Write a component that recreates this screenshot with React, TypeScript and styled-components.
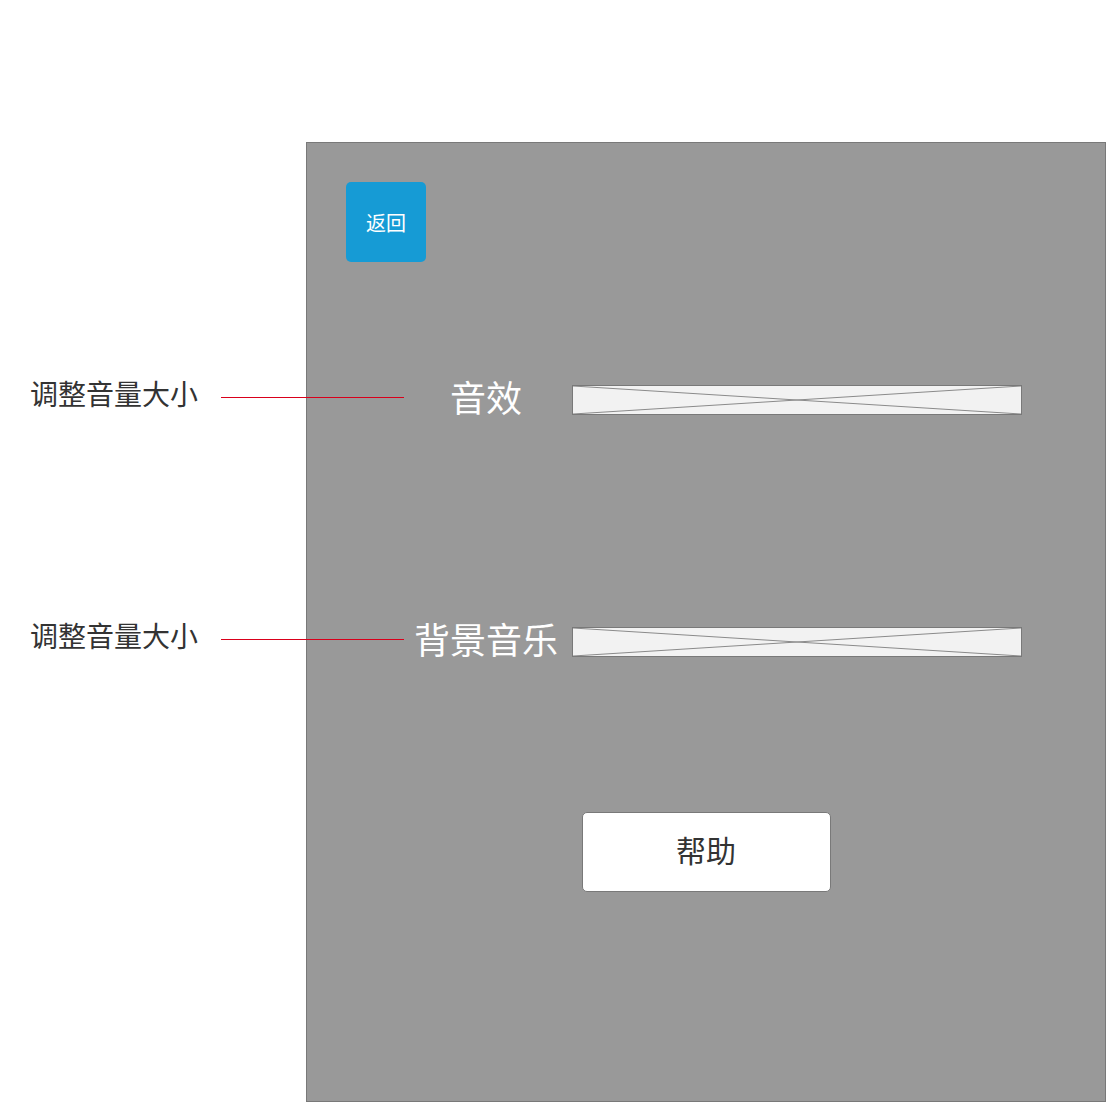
import React from "react";
import styled, { createGlobalStyle } from "styled-components";

const GlobalStyle = createGlobalStyle`
  html, body {
    margin: 0;
    padding: 0;
    background: #ffffff;
  }
  * { box-sizing: border-box; }
`;

const FONT = `"Noto Sans CJK SC", "Noto Sans", "Liberation Sans", sans-serif`;

const Page = styled.div`
  position: relative;
  width: 1106px;
  height: 1102px;
  padding: 142px 0 0 306px;
  font-family: ${FONT};
  overflow: hidden;
`;

const Panel = styled.div`
  width: 800px;
  height: 960px;
  border: 1px solid #797979;
  background: #999999;
  padding: 39px;
  display: flex;
  flex-direction: column;
`;

const BackButton = styled.button`
  width: 80px;
  height: 80px;
  border: none;
  border-radius: 5px;
  background: #169bd5;
  color: #ffffff;
  font-family: ${FONT};
  font-size: 20px;
  padding: 0;
  cursor: pointer;
`;

const Row = styled.div<{ $top: number }>`
  display: flex;
  align-items: center;
  height: 30px;
  margin-top: ${(p) => p.$top}px;
  margin-left: 60px;
`;

const Label = styled.div`
  width: 160px;
  text-align: center;
  color: #ffffff;
  font-size: 36px;
  line-height: 30px;
  padding-bottom: 9px;
  white-space: nowrap;
`;

const Slider = styled.div`
  width: 450px;
  height: 30px;
  margin-left: 6px;
  border: 1px solid #797979;
  background: #f2f2f2;
  display: flex;
  svg {
    width: 100%;
    height: 100%;
    display: block;
  }
`;

const HelpButton = styled.button`
  align-self: center;
  width: 249px;
  height: 80px;
  margin-top: 155px;
  border: 1px solid #797979;
  border-radius: 5px;
  background: #ffffff;
  color: #333333;
  font-family: ${FONT};
  font-size: 30px;
  padding: 0 0 7px 0;
  cursor: pointer;
`;

const Note = styled.div<{ $top: number }>`
  position: absolute;
  left: 30px;
  top: ${(p) => p.$top}px;
  height: 40px;
  display: flex;
  align-items: center;
`;

const NoteText = styled.div`
  width: 191px;
  color: #333333;
  font-size: 28px;
  line-height: 32px;
  padding-bottom: 8px;
  white-space: nowrap;
`;

const NoteLine = styled.div`
  width: 183px;
  height: 1px;
  background: #d9001b;
`;

const Placeholder = () => (
  <Slider>
    <svg viewBox="0 0 448 28" preserveAspectRatio="none">
      <line x1="0" y1="0" x2="448" y2="28" stroke="#8a8a8a" strokeWidth="1" />
      <line x1="0" y1="28" x2="448" y2="0" stroke="#8a8a8a" strokeWidth="1" />
    </svg>
  </Slider>
);

export default function App() {
  return (
    <>
      <GlobalStyle />
      <Page>
        <Panel>
          <BackButton>返回</BackButton>
          <Row $top={123}>
            <Label>音效</Label>
            <Placeholder />
          </Row>
          <Row $top={212}>
            <Label>背景音乐</Label>
            <Placeholder />
          </Row>
          <HelpButton>帮助</HelpButton>
        </Panel>
        <Note $top={377}>
          <NoteText>调整音量大小</NoteText>
          <NoteLine />
        </Note>
        <Note $top={619}>
          <NoteText>调整音量大小</NoteText>
          <NoteLine />
        </Note>
      </Page>
    </>
  );
}
